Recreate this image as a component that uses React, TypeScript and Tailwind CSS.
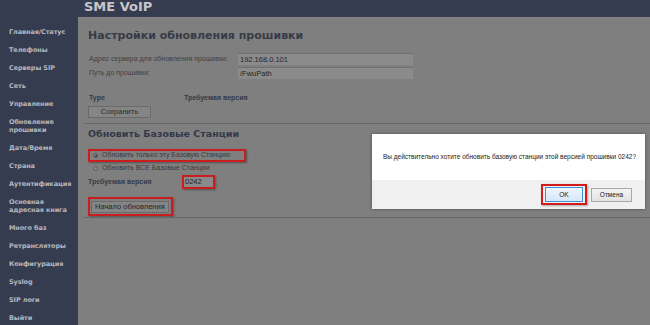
import React from "react";

const navItems: string[][] = [
  ["Главная/Статус"],
  ["Телефоны"],
  ["Серверы SIP"],
  ["Сеть"],
  ["Управление"],
  ["Обновление", "прошивки"],
  ["Дата/Время"],
  ["Страна"],
  ["Аутентификация"],
  ["Основная", "адресная книга"],
  ["Много баз"],
  ["Ретрансляторы"],
  ["Конфигурация"],
  ["Syslog"],
  ["SIP логи"],
  ["Выйти"],
];

export default function App() {
  return (
    <div
      className="relative w-[650px] h-[325px] overflow-hidden bg-[#7f7f7f] flex flex-col"
      style={{ fontFamily: '"Liberation Sans", Arial, sans-serif' }}
    >
      {/* header */}
      <div className="h-[17px] shrink-0 bg-[#363c4f] flex items-center pl-[84px] overflow-hidden">
        <span
          className="text-[13px] font-bold text-[#c4c6cc] leading-[15px] relative top-[-2px]"
          style={{ fontFamily: '"DejaVu Sans", Verdana, sans-serif' }}
        >
          SME VoIP
        </span>
      </div>
      <div className="flex flex-1">
        {/* sidebar */}
        <div
          className="w-[78px] shrink-0 bg-[#363c4f] pt-[6px] pl-[9px]"
          style={{ fontFamily: '"DejaVu Sans", Verdana, sans-serif' }}
        >
          {navItems.map((lines, i) => (
            <div key={i} className="py-[5px] text-[6.5px] font-bold leading-[8px] text-[#b3b6be] tracking-[-0.1px]">
              {lines.map((l, j) => (
                <div key={j}>{l}</div>
              ))}
            </div>
          ))}
        </div>
        {/* content */}
        <div className="flex-1 pl-[6px] border-t border-[#888]">
          <div className="pl-[4px] pt-[11px]">
            <div
              className="text-[11px] font-bold leading-[14px] text-[#373b47]"
              style={{ fontFamily: '"DejaVu Sans", Verdana, sans-serif' }}
            >
              Настройки обновления прошивки
            </div>
            <div className="mt-[10px] flex flex-col gap-[2px] text-[7px] text-[#424242]">
              <div className="flex items-center h-[12px]">
                <div className="w-[150px] pl-[1px] whitespace-nowrap">Адрес сервера для обновления прошивки:</div>
                <div className="w-[175px] h-[12px] bg-[#8b8b8b] border-t border-[#6f6f6f] flex items-center pl-[2px] text-[7.5px] text-[#262626]">
                  192.168.0.101
                </div>
              </div>
              <div className="flex items-center h-[12px]">
                <div className="w-[150px] pl-[1px]">Путь до прошивки:</div>
                <div className="w-[175px] h-[12px] bg-[#8b8b8b] border-t border-[#6f6f6f] flex items-center pl-[2px] text-[7.5px] text-[#262626]">
                  /FwuPath
                </div>
              </div>
            </div>
            <div className="mt-[14px] flex h-[10px] items-center text-[7px] font-bold text-[#353a48]">
              <div className="w-[96px] pl-[1px]">Type</div>
              <div>Требуемая версия</div>
            </div>
            <div className="mt-[3px] w-[63px] h-[12px] bg-[#858585] border border-[#6a6a6a] flex items-center justify-center text-[7.5px] text-[#2a2a2a]">
              Сохранить
            </div>
          </div>
          <div className="mt-[5px] border-t border-[#676767]" />
          <div className="pl-[4px]">
            <div
              className="mt-[4px] text-[9.5px] leading-[12px] text-[#34394a]"
              style={{ fontFamily: '"DejaVu Sans", Verdana, sans-serif', fontWeight: 600 }}
            >
              Обновить Базовые Станции
            </div>
            <div className="mt-[9px] w-[158px] h-[13px] border-2 border-[#c81e1e] flex items-center pl-[3px] text-[7px] text-[#3a3a3a] shadow-[1px_1px_2px_rgba(0,0,0,0.35)]">
              <span className="w-[5px] h-[5px] rounded-full bg-[#8a8a8a] border border-[#5a5a5a] flex items-center justify-center mr-[4px]">
                <span className="w-[2px] h-[2px] rounded-full bg-[#333]" />
              </span>
              Обновить только эту Базовую Станцию
            </div>
            <div className="mt-[1px] h-[11px] flex items-center pl-[5px] text-[7px] text-[#3a3a3a]">
              <span className="w-[5px] h-[5px] rounded-full bg-[#8a8a8a] border border-[#5e5e5e] mr-[4px]" />
              Обновить ВСЕ Базовые Станции
            </div>
            <div className="mt-[1px] flex items-center h-[14px]">
              <div className="w-[94px] text-[7px] font-bold text-[#353a48]">Требуемая версия</div>
              <div className="w-[33px] h-[14px] border-2 border-[#c81e1e] bg-[#8a8a8a] flex items-center pl-[1px] text-[7.5px] text-[#262626] shadow-[1px_1px_2px_rgba(0,0,0,0.35)]">
                0242
              </div>
            </div>
            <div className="mt-[8px] w-[85px] h-[19px] border-2 border-[#c81e1e] flex items-center justify-start pl-[1px] shadow-[1px_1px_2px_rgba(0,0,0,0.35)]">
              <div className="w-[78px] h-[12px] bg-[#858585] border border-[#6a6a6a] flex items-center pl-[3px] text-[7.5px] text-[#262626]">
                Начало обновления
              </div>
            </div>
          </div>
          <div className="mt-[1px] border-t border-[#676767]" />
        </div>
      </div>

      {/* dialog */}
      <div className="absolute left-[372px] top-[134px] w-[273px] h-[75px] bg-white flex flex-col shadow-[0_0_3px_rgba(0,0,0,0.4)]">
        <div className="h-[46px] flex items-center justify-center text-[6.5px] text-[#222] pl-[2px]">
          Вы действительно хотите обновить базовую станции этой версией прошивки 0242?
        </div>
        <div className="flex-1 bg-[#f0f0f0] flex items-center justify-end pr-[13px] gap-[4px]">
          <div className="w-[46px] h-[21px] border-2 border-[#d21c1c] flex items-center justify-center shadow-[1px_1px_2px_rgba(0,0,0,0.3)]">
            <div className="w-[38px] h-[15px] border border-[#3c8fd8] bg-gradient-to-b from-[#eef6fd] to-[#d6e8f7] flex items-center justify-center text-[6.5px] text-[#222]">
              OK
            </div>
          </div>
          <div className="w-[41px] h-[14px] border border-[#a8a8a8] bg-gradient-to-b from-[#f4f4f4] to-[#e2e2e2] flex items-center justify-center text-[6.5px] text-[#222]">
            Отмена
          </div>
        </div>
      </div>
    </div>
  );
}
